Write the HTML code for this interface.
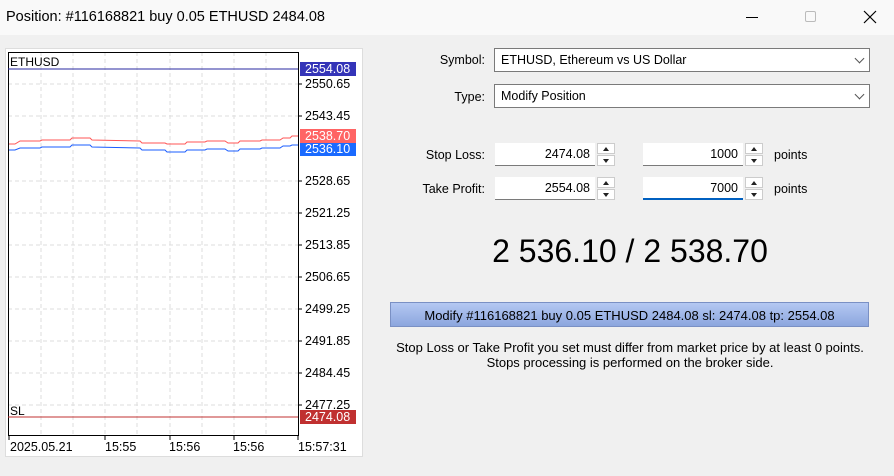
<!DOCTYPE html>
<html><head><style>
*{margin:0;padding:0;box-sizing:border-box}
body{width:894px;height:476px;background:#f0f0f0;font-family:"Liberation Sans",sans-serif;font-size:12px;color:#000;position:relative;overflow:hidden}
.a{position:absolute}
.title{left:0;top:0;width:894px;height:35px;background:#f9f9f9}
.combo{background:#fff;border:1px solid #7a7a7a;height:24px;padding:4px 0 0 6px;font-size:12.5px}
.combo:after{content:"";position:absolute;right:6px;top:6px;width:6px;height:6px;border-right:1px solid #555;border-bottom:1px solid #555;transform:rotate(45deg)}
.inp{background:#fff;border-bottom:1px solid #7a7a7a;height:23px;text-align:right;padding:4px 5px 0 0;font-size:12.5px}
.spin{width:18px;height:23px}
.spin div{width:18px;height:11px;background:#fff;border:1px solid #ccc;margin-bottom:1px;position:relative}
.spin div:after{content:"";position:absolute;left:5px;top:3px;border-left:3px solid transparent;border-right:3px solid transparent}
.up:after{border-bottom:4px solid #222}
.dn:after{border-top:4px solid #222}
.lbl{text-align:right;width:100px;font-size:12.5px}
.ax{left:305px;font-size:12.5px}
</style></head><body>
<div class="a title"></div>
<div class="a" style="left:6px;top:9px;font-size:14.5px">Position: #116168821 buy 0.05 ETHUSD 2484.08</div>
<div class="a" style="left:746px;top:17px;width:12px;height:1px;background:#000"></div>
<div class="a" style="left:805px;top:11px;width:11px;height:11px;border:1px solid #bbb;border-radius:2px"></div>
<svg class="a" style="left:863px;top:10px" width="14" height="14"><path d="M1 1L13 13M13 1L1 13" stroke="#000" stroke-width="1.2"/></svg>

<div class="a" style="left:5px;top:48px;width:358px;height:409px;background:#fff;border:1px solid #ddd"></div>
<svg class="a" style="left:0;top:0" width="370" height="470">
<g stroke="#ddd" stroke-dasharray="4,3">
<path d="M8 84H298M8 116H298M8 181H298M8 213H298M8 245H298M8 277H298M8 309H298M8 341H298M8 373H298M8 405H298"/>
<path d="M41 52V435M73 52V435M105 52V435M137 52V435M170 52V435M202 52V435M234 52V435M266 52V435"/>
</g>
<rect x="8.5" y="52.5" width="290" height="383" fill="none" stroke="#000"/>
<path d="M8 69H298" stroke="#2a2aa0"/>
<path d="M8 417H298" stroke="#c03030"/>
<polyline fill="none" stroke="#ff5555" points="9,144 15,144 20,141 40,141 42,140 70,140 72,138 90,138 92,140 140,141 142,143 165,143 167,144 185,144 187,142 205,142 207,141 225,141 228,143 238,143 240,141 260,141 262,140 280,140 283,138 290,138 292,136 298,136"/>
<polyline fill="none" stroke="#1a5cff" points="9,150 15,150 20,148 40,148 42,147 70,147 72,145 90,145 92,147 140,148 142,150 165,150 167,152 185,152 187,150 205,150 207,149 225,149 228,151 238,151 240,149 260,149 262,148 280,148 283,146 290,146 292,145 298,145"/>
<g stroke="#000"><path d="M298 84h4M298 116h4M298 181h4M298 213h4M298 245h4M298 277h4M298 309h4M298 341h4M298 373h4M298 405h4"/>
<path d="M9 435v5M105 435v5M170 435v5M234 435v5M298 435v5"/></g>
</svg>
<div class="a" style="left:10px;top:55px;font-size:12px">ETHUSD</div>
<div class="a" style="left:10px;top:404px;font-size:12px">SL</div>
<div class="a" style="left:300px;top:62px;width:56px;height:14px;background:#3434b8;color:#fff;font-size:12.5px;padding-left:5px;line-height:14px">2554.08</div>
<div class="a" style="left:300px;top:129px;width:56px;height:14px;background:#ff6464;color:#fff;font-size:12.5px;padding-left:5px;line-height:14px">2538.70</div>
<div class="a" style="left:300px;top:143px;width:56px;height:13px;background:#1a6aff;color:#fff;font-size:12.5px;padding-left:5px;line-height:13px">2536.10</div>
<div class="a" style="left:300px;top:410px;width:56px;height:14px;background:#c03030;color:#fff;font-size:12.5px;padding-left:5px;line-height:14px">2474.08</div>
<div class="a ax" style="top:77px">2550.65</div>
<div class="a ax" style="top:109px">2543.45</div>
<div class="a ax" style="top:174px">2528.65</div>
<div class="a ax" style="top:206px">2521.25</div>
<div class="a ax" style="top:238px">2513.85</div>
<div class="a ax" style="top:270px">2506.65</div>
<div class="a ax" style="top:302px">2499.25</div>
<div class="a ax" style="top:334px">2491.85</div>
<div class="a ax" style="top:366px">2484.45</div>
<div class="a ax" style="top:398px">2477.25</div>
<div class="a" style="left:10px;top:440px;font-size:12.5px">2025.05.21</div>
<div class="a" style="left:105px;top:440px;font-size:12.5px">15:55</div>
<div class="a" style="left:169px;top:440px;font-size:12.5px">15:56</div>
<div class="a" style="left:233px;top:440px;font-size:12.5px">15:56</div>
<div class="a" style="left:298px;top:440px;font-size:12.5px">15:57:31</div>

<div class="a lbl" style="left:385px;top:53px">Symbol:</div>
<div class="a combo" style="left:494px;top:48px;width:376px">ETHUSD, Ethereum vs US Dollar</div>
<div class="a lbl" style="left:385px;top:90px">Type:</div>
<div class="a combo" style="left:494px;top:84px;width:376px">Modify Position</div>

<div class="a lbl" style="left:385px;top:148px">Stop Loss:</div>
<div class="a inp" style="left:495px;top:143px;width:100px">2474.08</div>
<div class="a spin" style="left:597px;top:143px"><div class="up"></div><div class="dn"></div></div>
<div class="a inp" style="left:643px;top:143px;width:100px">1000</div>
<div class="a spin" style="left:745px;top:143px"><div class="up"></div><div class="dn"></div></div>
<div class="a" style="left:774px;top:148px;font-size:12.5px">points</div>

<div class="a lbl" style="left:385px;top:182px">Take Profit:</div>
<div class="a inp" style="left:495px;top:177px;width:100px">2554.08</div>
<div class="a spin" style="left:597px;top:177px"><div class="up"></div><div class="dn"></div></div>
<div class="a inp" style="left:643px;top:177px;width:100px;border-bottom:2px solid #0060c0">7000</div>
<div class="a spin" style="left:745px;top:177px"><div class="up"></div><div class="dn"></div></div>
<div class="a" style="left:774px;top:182px;font-size:12.5px">points</div>

<div class="a" style="left:390px;top:233px;width:480px;text-align:center;font-size:32px">2 536.10 / 2 538.70</div>
<div class="a" style="left:390px;top:302px;width:479px;height:25px;background:linear-gradient(#b4c8f2,#8ca6de);border:1px solid #7a90c4;text-align:center;padding-top:5px;font-size:13px">Modify #116168821 buy 0.05 ETHUSD 2484.08 sl: 2474.08 tp: 2554.08</div>
<div class="a" style="left:370px;top:340px;width:520px;text-align:center;font-size:13px;line-height:15px">Stop Loss or Take Profit you set must differ from market price by at least 0 points.<br>Stops processing is performed on the broker side.</div>
</body></html>
